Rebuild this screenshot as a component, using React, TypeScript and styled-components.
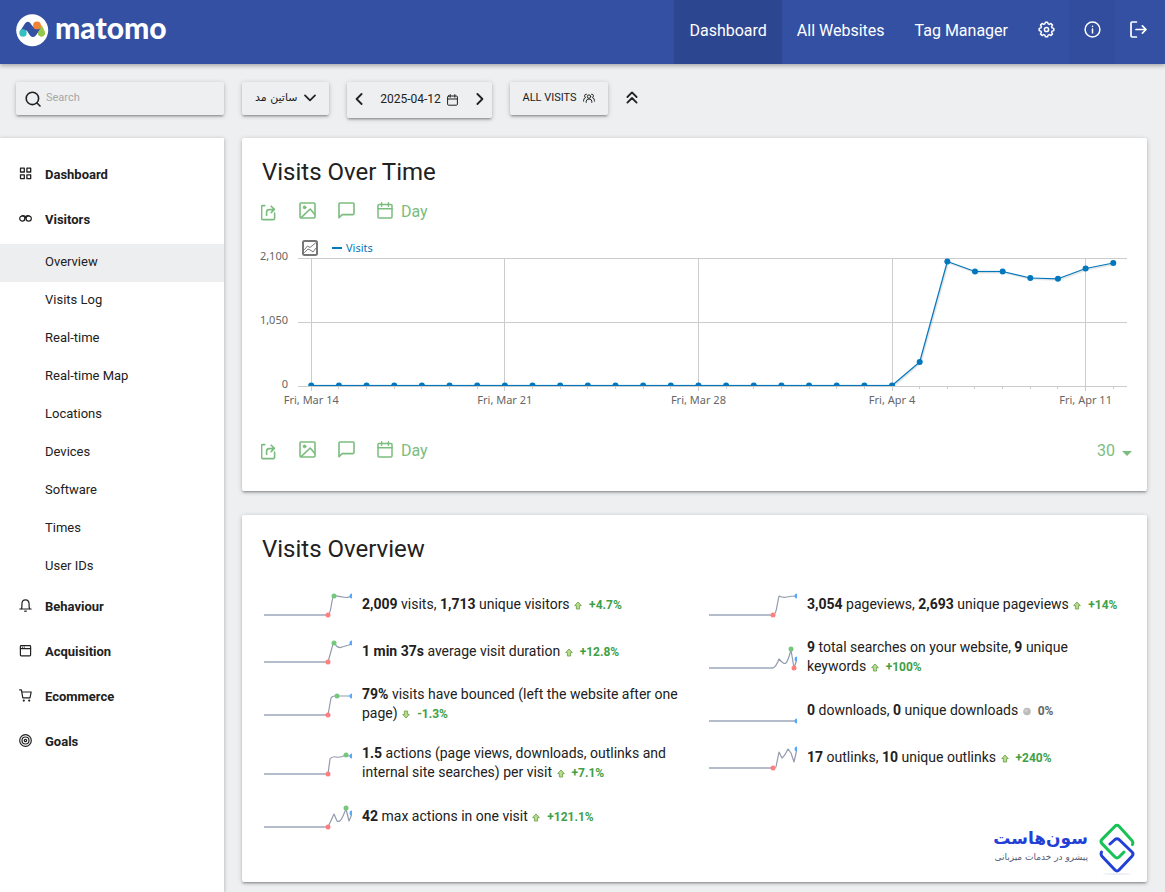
import React from "react";
import styled, { createGlobalStyle, css } from "styled-components";

const GREEN = "#7bbd7e";
const INK = "#212121";
const CHART_BLUE = "#0277bd";

const GlobalStyle = createGlobalStyle`
  *, *::before, *::after { box-sizing: border-box; }
  body {
    margin: 0;
    background: #eeeff1;
    color: ${INK};
    font-family: Roboto, "DejaVu Sans", sans-serif;
    font-size: 13px;
  }
  button, input, select { font: inherit; color: inherit; }
  a { color: inherit; text-decoration: none; }
  svg { display: block; flex: none; }
`;

const raised = css`
  box-shadow: 0 2px 2px 0 rgba(0, 0, 0, 0.14), 0 3px 1px -2px rgba(0, 0, 0, 0.12),
    0 1px 5px 0 rgba(0, 0, 0, 0.2);
`;

const Page = styled.div`
  display: flex;
  flex-direction: column;
  min-height: 100vh;
`;

/* Header */

const Header = styled.header`
  display: flex;
  justify-content: space-between;
  height: 64px;
  background: #3450a3;
  color: #fff;
  box-shadow: 0 2px 4px rgba(0, 0, 0, 0.28);
`;

const Brand = styled.a`
  display: flex;
  align-items: center;
  gap: 6px;
  height: 60px;
  padding-left: 16px;
`;

const Wordmark = styled.span`
  font-family: Lato, sans-serif;
  font-weight: 900;
  font-size: 30px;
  line-height: 32px;
  padding-bottom: 6px;
`;

const TopNav = styled.nav`
  display: flex;
  padding-right: 4px;
`;

const TopLink = styled.a<{ $active?: boolean }>`
  display: flex;
  align-items: center;
  padding: 0 15px 4px;
  font-size: 16px;
  background: ${(p) => (p.$active ? "#2d4690" : "transparent")};
`;

const TopIcon = styled.a<{ $shade?: boolean }>`
  display: flex;
  align-items: center;
  justify-content: center;
  width: 46px;
  padding-bottom: 6px;
  background: ${(p) => (p.$shade ? "#324d9e" : "transparent")};
`;

/* Toolbar */

const Toolbar = styled.div`
  display: flex;
  align-items: flex-start;
  gap: 18px;
  padding: 18px 16px 0;
  height: 74px;
`;

const SearchBox = styled.label`
  display: flex;
  align-items: center;
  gap: 5px;
  width: 208px;
  height: 33px;
  padding: 0 9px;
  border-radius: 2px;
  ${raised}
`;

const SearchInput = styled.input`
  flex: 1;
  min-width: 0;
  height: 20px;
  border: 0;
  padding: 0 0 3px;
  background: none;
  font-size: 11px;
  outline: none;
  &::placeholder { color: #a6a7a9; opacity: 1; }
`;

const ToolButton = styled.button`
  display: flex;
  align-items: center;
  gap: 6px;
  height: 33px;
  padding: 0 13px 2px;
  border: 0;
  border-radius: 2px;
  background: none;
  font-size: 11px;
  ${raised}
`;

const SiteName = styled.span`
  font-family: "DejaVu Sans", sans-serif;
  font-size: 11px;
`;

const DateBox = styled.div`
  display: flex;
  align-items: center;
  justify-content: space-between;
  width: 145px;
  height: 36px;
  padding: 0 8px 3px;
  border-radius: 2px;
  ${raised}
`;

const PlainButton = styled.button`
  display: flex;
  align-items: center;
  gap: 6px;
  padding: 0;
  border: 0;
  background: none;
`;

const DateButton = styled(PlainButton)`
  padding-top: 1px;
  font-size: 12px;
  svg { margin-top: 2px; }
`;

const CollapseButton = styled(PlainButton)`
  height: 30px;
`;

/* Sidebar */

const Columns = styled.div`
  display: flex;
  flex: 1;
  align-items: stretch;
  gap: 18px;
  padding-right: 18px;
`;

const Sidebar = styled.nav`
  flex: none;
  width: 224px;
  padding: 16px 0;
  background: #fff;
  box-shadow: 0 1px 4px rgba(0, 0, 0, 0.3);
`;

const Category = styled.a`
  display: flex;
  align-items: center;
  gap: 13px;
  height: 45px;
  padding: 0 19px 4px;
  font-weight: 700;
  svg { margin-bottom: 2px; }
`;

const SubItem = styled.a<{ $active?: boolean }>`
  display: flex;
  align-items: center;
  height: 38px;
  padding: 0 16px 4px 45px;
  background: ${(p) => (p.$active ? "#edeef0" : "transparent")};
`;

/* Cards */

const Main = styled.main`
  flex: 1;
  min-width: 0;
  display: flex;
  flex-direction: column;
  gap: 24px;
  padding-bottom: 10px;
`;

const Card = styled.section`
  position: relative;
  padding: 20px;
  background: #fff;
  border-radius: 2px;
  ${raised}
`;

const CardTitle = styled.h2`
  margin: 0;
  font-weight: 400;
  font-size: 24px;
  line-height: 28px;
`;

const Actions = styled.div`
  display: flex;
  align-items: center;
  gap: 22px;
  height: 20px;
  margin-left: -1px;
  color: ${GREEN};
`;

const ActionButton = styled.button`
  display: flex;
  align-items: center;
  gap: 8px;
  padding: 0;
  border: 0;
  background: none;
  font-size: 16px;
  line-height: 20px;
  svg { margin-bottom: 4px; }
`;

const RowLimit = styled.label`
  display: flex;
  align-items: center;
  gap: 7px;
  margin-left: auto;
  margin-right: -5px;
  font-size: 16px;
  svg { margin-top: 4px; }
`;

const LimitSelect = styled.select`
  appearance: none;
  border: 0;
  padding: 0;
  background: none;
  line-height: 20px;
`;

const Legend = styled.div`
  display: flex;
  align-items: center;
  gap: 14px;
  height: 16px;
  padding-left: 40px;
  color: ${CHART_BLUE};
  font-family: "Noto Sans", sans-serif;
  font-size: 11px;
  line-height: 14px;
`;

const LegendItem = styled.span`
  display: flex;
  align-items: center;
  gap: 4px;
`;

const LegendDash = styled.span`
  width: 10px;
  height: 2px;
  background: ${CHART_BLUE};
`;

const ChartArea = styled.div`
  padding: 2px 0 0 36px;
  font-family: "Noto Sans", sans-serif;
  font-size: 11px;
`;

const CardHeaderActions = styled.div`
  margin: 16px 0 18px;
`;

const CardFooterActions = styled.div`
  margin: 31px 0 10px;
`;

const Metrics = styled.div`
  display: grid;
  grid-template-columns: 1fr 1fr;
  gap: 25px;
  padding: 18px 0 22px;
`;

const MetricRow = styled.div`
  display: flex;
  align-items: center;
  gap: 10px;
  min-height: 47px;
  padding: 10px 0 10px 2px;
`;

const MetricText = styled.p`
  margin: 0;
  font-size: 14px;
  line-height: 19px;
`;

const Trend = styled.span<{ $flat?: boolean }>`
  white-space: nowrap;
  font-size: 12px;
  font-weight: 700;
  color: ${(p) => (p.$flat ? "#666" : "#3fa046")};
  svg {
    display: inline-block;
    vertical-align: -1px;
    margin: 0 7px 0 1px;
  }
`;

const HostBadge = styled.div`
  position: absolute;
  right: 12px;
  bottom: 7px;
  display: flex;
  align-items: center;
  gap: 11px;
`;

const HostText = styled.div`
  display: flex;
  flex-direction: column;
  align-items: flex-end;
  padding-bottom: 8px;
  font-family: "DejaVu Sans", sans-serif;
`;

const HostName = styled.strong`
  font-size: 17px;
  line-height: 24px;
  color: #2340d6;
`;

const HostTag = styled.span`
  font-size: 9px;
  line-height: 14px;
  color: #555b75;
`;

/* Icons */

type IconProps = { w?: number; h?: number; sw?: number; box: string; children: React.ReactNode };

const Icon = ({ w = 16, h = 16, sw = 1.5, box, children }: IconProps) => (
  <svg
    width={w}
    height={h}
    viewBox={box}
    fill="none"
    stroke="currentColor"
    strokeWidth={sw}
    strokeLinecap="round"
    strokeLinejoin="round"
    aria-hidden="true"
  >
    {children}
  </svg>
);

const MatomoMark = () => (
  <svg width="33" height="33" viewBox="0 0 33 33" aria-hidden="true">
    <circle cx="16.2" cy="16.2" r="16" fill="#fff" />
    <path
      d="M4 17.2 L9 9.4 Q11.2 6.6 14 8.8 L17 12.8 L24.6 14 L19.8 21.4 Q17 24.6 14 21.4 L10.6 16.2 L8 20 Z"
      fill="#3450a3"
    />
    <path d="M23.6 11 Q25.4 10.4 26.4 12.4 L28.8 17.4 A3.7 3.7 0 1 1 21.8 19.4 Z" fill="#95c748" />
    <path d="M16.6 12.4 L21 15.4 L24.6 14 L20.4 20.6 L16 17 Z" fill="#3450a3" />
    <circle cx="7" cy="19" r="3.7" fill="#35bfc0" />
    <circle cx="21" cy="11.4" r="3.9" fill="#f38334" />
  </svg>
);

const GearIcon = () => (
  <Icon w={17} h={17} sw={1.5} box="0 0 17 17">
    <path d="M7.4 1.2h2.2l.5 1.7 1.2.5 1.6-.9 1.6 1.6-.9 1.6.5 1.2 1.7.5v2.2l-1.7.5-.5 1.2.9 1.6-1.6 1.6-1.6-.9-1.2.5-.5 1.7H7.4l-.5-1.7-1.2-.5-1.6.9-1.6-1.6.9-1.6-.5-1.2-1.7-.5V7.4l1.7-.5.5-1.2-.9-1.6 1.6-1.6 1.6.9 1.2-.5z" />
    <circle cx="8.5" cy="8.5" r="2.1" />
  </Icon>
);

const InfoIcon = () => (
  <Icon w={17} h={17} box="0 0 17 17">
    <circle cx="8.5" cy="8.5" r="7.4" />
    <path d="M8.5 8v4M8.5 5.2v.2" />
  </Icon>
);

const LogoutIcon = () => (
  <Icon w={17} h={17} sw={1.7} box="0 0 17 17">
    <path d="M6.4 1H2.2Q1 1 1 2.2v12.6Q1 16 2.2 16h4.2M6 8.5h10M12.4 4.9 16 8.5l-3.6 3.6" />
  </Icon>
);

const SearchIcon = () => (
  <Icon w={16} h={16} sw={1.6} box="0 0 16 16">
    <circle cx="7.4" cy="7.4" r="6.2" />
    <path d="m12 12 3 3" />
  </Icon>
);

const ChevronIcon = ({ dir }: { dir: "down" | "left" | "right" }) => {
  if (dir === "down")
    return (
      <Icon w={12} h={8} sw={1.7} box="0 0 12 8">
        <path d="m1 1.4 5 5 5-5" />
      </Icon>
    );
  return (
    <Icon w={8} h={12} sw={1.8} box="0 0 8 12">
      <path d={dir === "left" ? "m6.6 1-5 5 5 5" : "m1.4 1 5 5-5 5"} />
    </Icon>
  );
};

const SmallCalendarIcon = () => (
  <Icon w={11} h={12} sw={1} box="0 0 11 12">
    <rect x=".6" y="2" width="9.8" height="9.2" rx="1" />
    <path d="M.6 5h9.8M3.2.6v2.6M7.8.6v2.6" />
  </Icon>
);

const PeopleIcon = () => (
  <Icon w={12} h={10} sw={1} box="0 0 12 10">
    <circle cx="6" cy="3.6" r="1.7" />
    <path d="M3.2 9.4V8.2Q3.4 6 6 6t2.8 2.2v1.2M3.4 1.2Q1.6 1 1.6 2.8q0 1.4 1 1.8Q.6 5 .6 7.4v.8M8.6 1.2q1.8-.2 1.8 1.6 0 1.4-1 1.8 2 .4 2 2.8v.8" />
  </Icon>
);

const CollapseIcon = () => (
  <Icon w={12} h={13} sw={1.8} box="0 0 12 13">
    <path d="m1.4 6 4.6-4.6L10.6 6M1.4 11.6 6 7l4.6 4.6" />
  </Icon>
);

const ExportIcon = () => (
  <Icon w={16} h={21} sw={1.6} box="1 -4 16 21">
    <path d="M4.8 1.6H2.6q-1 0-1 1v12q0 1 1 1h11q1 0 1-1V9" />
    <path d="M6.6 11.4V8.2q0-2.6 2.6-2.6h4.4M11.2 2.2l3.2 3.2-3.2 3.2" />
  </Icon>
);

const ImageIcon = () => (
  <Icon w={17} h={17} sw={1.6} box="0 0 17 17">
    <rect x="1" y="1" width="15" height="15" rx="1" />
    <circle cx="5.6" cy="5.4" r="1.4" fill="currentColor" strokeWidth="1" />
    <path d="m2.4 15.4 8.8-8.4 4.6 5.4" />
  </Icon>
);

const CommentIcon = () => (
  <Icon w={17} h={17} sw={1.6} box="0 0 17 17">
    <path d="M1 15.8V2q0-1 1-1h13q1 0 1 1v9.6q0 1-1 1H4.2z" />
  </Icon>
);

const CalendarIcon = () => (
  <Icon w={16} h={17} sw={1.5} box="0 0 16 17">
    <rect x="1" y="2.4" width="14" height="13.6" rx="1" />
    <path d="M1 6.8h14M4.6.8v3.4M11.4.8v3.4" />
  </Icon>
);

const SeriesIcon = () => (
  <Icon w={16} h={16} sw={2} box="0 0 16 16">
    <g stroke="#777">
      <rect x="1" y="1" width="14" height="14" rx="1.5" />
      <path strokeWidth="1" d="m2.5 9.5 3-3.5 2.5 1.5 5.5-4.5M2.5 12.5 6 9l3 1.5 2 1.5 2.5-3.5" />
    </g>
  </Icon>
);

const CaretIcon = () => (
  <svg width="10" height="5" viewBox="0 0 10 5" aria-hidden="true">
    <path d="M0 0h10L5 5z" fill="currentColor" />
  </svg>
);

const GridIcon = () => (
  <Icon w={13} h={13} sw={1.3} box="0 0 13 13">
    <path d="M1.5 1.2h3.8v3.8H1.5zM7.9 1.2h3.8v3.8H7.9zM1.5 7.8h3.8v3.8H1.5zM7.9 7.8h3.8v3.8H7.9z" />
  </Icon>
);

const BinocularsIcon = () => (
  <Icon w={13} h={13} sw={1.2} box="0 0 13 13">
    <circle cx="3.3" cy="6.6" r="2.6" />
    <circle cx="9.7" cy="6.6" r="2.6" />
    <path d="M2.6 4Q4.6 3 6.5 4.8Q8.4 3 10.4 4M5.3 8Q6.5 4.6 7.7 4.2" />
  </Icon>
);

const BellIcon = () => (
  <Icon w={13} h={13} sw={1.2} box="0 0 13 13">
    <path d="M.8 10h11.4M2.2 10q.7-1 .7-3V5.2Q2.9.8 6.5.8t3.6 4.4V7q0 2 .7 3M5.7 12.2h1.6" />
  </Icon>
);

const WindowIcon = () => (
  <Icon w={13} h={13} sw={1.2} box="0 0 13 13">
    <rect x="1.4" y="1.6" width="10.2" height="10.2" rx=".8" />
    <path d="M1.4 4.6h10.2M3.4 3.1h.1M5.2 3.1h.1" />
  </Icon>
);

const CartIcon = () => (
  <Icon w={13} h={13} sw={1.2} box="0 0 13 13">
    <path d="M.6.8h1.8l1.4 8h7.2l1.2-5.8H3" />
    <circle cx="4.8" cy="11.6" r=".5" fill="currentColor" />
    <circle cx="10.2" cy="11.6" r=".5" fill="currentColor" />
  </Icon>
);

const TargetIcon = () => (
  <Icon w={13} h={13} sw={1.2} box="0 0 13 13">
    <circle cx="6.5" cy="6.5" r="5.8" />
    <circle cx="6.5" cy="6.5" r="3.5" />
    <circle cx="6.5" cy="6.5" r="1.2" />
  </Icon>
);

const HostMark = () => (
  <svg width="36" height="52" viewBox="0 0 36 52" aria-hidden="true">
    <ellipse cx="18" cy="51" rx="14" ry="1" fill="#eceef5" />
    <g fill="none" strokeWidth="3" strokeLinecap="round" strokeLinejoin="round">
      <path stroke="#17c257" d="M33.5 21.5q1-2.5-.8-4.3L20 3.2q-2-1.8-4 0L3 16.4q-2 2.1 0 4.2L16 34q2 2 4 0l5-5" />
      <path stroke="#2340d6" d="m11 21 5-4.5q2-1.6 4 0L33 29q2 2.1 0 4.2L20 47q-2 2-4 0L3.2 33.5q-1.8-2-.7-4.5" />
    </g>
  </svg>
);

const TrendIcon = ({ kind }: { kind: "up" | "down" | "flat" }) => {
  if (kind === "flat")
    return (
      <svg width="8" height="9" viewBox="0 0 8 9" role="img" aria-label="unchanged">
        <circle cx="4" cy="4.5" r="3.8" fill="#bcbcbc" />
        <circle cx="3" cy="3.5" r="1.6" fill="#cfcfcf" />
      </svg>
    );
  return (
    <svg width="8" height="9" viewBox="0 0 8 9" role="img" aria-label={kind}>
      <path
        d={kind === "up" ? "M4 1 7.3 4.6H5.6V8H2.4V4.6H.7z" : "M4 8 .7 4.4h1.7V1h3.2v3.4h1.7z"}
        fill="#b9dc8a"
        stroke="#6fa653"
        strokeWidth=".9"
      />
    </svg>
  );
};

/* Evolution chart */

const PLOT_HEIGHT = 128;
const visits = [...Array(22).fill(127.5), 104, 3.5, 13.5, 13.5, 20, 20.8, 10.5, 5];
const xAt = (i: number) => `${1.6 + i * 3.336}%`;
const weekLabels: Record<number, string> = {
  0: "Fri, Mar 14",
  7: "Fri, Mar 21",
  14: "Fri, Mar 28",
  21: "Fri, Apr 4",
  28: "Fri, Apr 11",
};

const EvolutionChart = () => (
  <svg width="100%" height="152" overflow="visible" role="img" aria-label="Visits per day">
    <g stroke="#ccc" shapeRendering="crispEdges">
      {[0, 64, PLOT_HEIGHT].map((y) => (
        <line key={y} x1="0" x2="100%" y1={y + 0.5} y2={y + 0.5} />
      ))}
      {visits.map((_, i) => (
        <line key={i} x1={xAt(i)} x2={xAt(i)} y1={weekLabels[i] ? 0 : PLOT_HEIGHT} y2={weekLabels[i] ? 133 : 131} />
      ))}
    </g>
    <svg width="100%" height={PLOT_HEIGHT}>
      <g stroke="#000" strokeOpacity="0.1" strokeWidth="2" transform="translate(1 1)">
        {visits.slice(1).map((y, i) => (
          <line key={i} x1={xAt(i)} y1={visits[i]} x2={xAt(i + 1)} y2={y} />
        ))}
      </g>
      <g stroke={CHART_BLUE} strokeWidth="1.2">
        {visits.slice(1).map((y, i) => (
          <line key={i} x1={xAt(i)} y1={visits[i]} x2={xAt(i + 1)} y2={y} />
        ))}
      </g>
      {visits.map((y, i) => (
        <circle key={i} cx={xAt(i)} cy={y} r="3" fill={CHART_BLUE} />
      ))}
    </svg>
    <g fill="#666">
      <text x="-10" y="2" textAnchor="end">2,100</text>
      <text x="-10" y="66" textAnchor="end">1,050</text>
      <text x="-10" y="130" textAnchor="end">0</text>
      {Object.entries(weekLabels).map(([i, label]) => (
        <text key={i} x={xAt(Number(i))} y="146" textAnchor="middle">{label}</text>
      ))}
    </g>
  </svg>
);

/* Sparklines */

type Spark = { path: string; low?: [number, number]; high?: [number, number]; last: number; flatTo?: number };

const Sparkline = ({ path, low, high, last, flatTo = 64 }: Spark) => (
  <svg width="88" height="26" viewBox="0 3 88 26" aria-hidden="true">
    <path d={`M0 26H${flatTo}`} stroke="#b5bccb" strokeWidth="2" />
    <path d={path} fill="none" stroke="#929bac" strokeWidth="1.2" strokeLinejoin="round" />
    {low && <circle cx={low[0]} cy={low[1]} r="2.5" fill="#ff7f7f" />}
    {high && <circle cx={high[0]} cy={high[1]} r="2.5" fill="#75c77d" />}
    <circle cx="88" cy={last} r="2.5" fill="#55aaff" />
  </svg>
);

type Metric = { text: React.ReactNode; kind: "up" | "down" | "flat"; change: string; spark: Spark };

const leftMetrics: Metric[] = [
  {
    text: <><b>2,009</b> visits, <b>1,713</b> unique visitors</>,
    kind: "up",
    change: "+4.7%",
    spark: { path: "M64 26C68 24 67 8 70 7C73 6 82 10 85 8L88 7", low: [64, 26], high: [70, 7], last: 7 },
  },
  {
    text: <><b>1 min 37s</b> average visit duration</>,
    kind: "up",
    change: "+12.8%",
    spark: { path: "M64 26L69 8L71 8Q74 13 78 11L85 9L88 7", low: [64, 26], high: [70, 7], last: 7 },
  },
  {
    text: <><b>79%</b> visits have bounced (left the website after one page)</>,
    kind: "down",
    change: "-1.3%",
    spark: { path: "M64 26L67 9Q68 7 71 7H88", low: [64, 26], high: [73, 7], last: 7 },
  },
  {
    text: <><b>1.5</b> actions (page views, downloads, outlinks and internal site searches) per visit</>,
    kind: "up",
    change: "+7.1%",
    spark: { path: "M64 26L66 11Q68 8 72 9T82 7L85 8L88 8", low: [64, 26], high: [82, 7], last: 8 },
  },
  {
    text: <><b>42</b> max actions in one visit</>,
    kind: "up",
    change: "+121.1%",
    spark: { path: "M64 26L70 13L73 20Q76 22 79 15L82 8L85 20L88 13", low: [64, 26], high: [82, 7], last: 12 },
  },
];

const rightMetrics: Metric[] = [
  {
    text: <><b>3,054</b> pageviews, <b>2,693</b> unique pageviews</>,
    kind: "up",
    change: "+14%",
    spark: { path: "M64 26Q67 25 68 17L70 7Q74 9 78 8T88 7", low: [64, 26], last: 7 },
  },
  {
    text: <><b>9</b> total searches on your website, <b>9</b> unique keywords</>,
    kind: "up",
    change: "+100%",
    spark: { path: "M64 26Q67 25 70 17Q75 23 77 21T82 8L85 26L88 17", low: [85, 26], high: [82, 7], last: 17 },
  },
  {
    text: <><b>0</b> downloads, <b>0</b> unique downloads</>,
    kind: "flat",
    change: "0%",
    spark: { path: "", last: 26, flatTo: 88 },
  },
  {
    text: <><b>17</b> outlinks, <b>10</b> unique outlinks</>,
    kind: "up",
    change: "+240%",
    spark: { path: "M64 26L67 25L70 10L73 16Q75 15 79 7L82 11L85 20L88 7", low: [64, 26], last: 7 },
  },
];

const MetricColumn = ({ items }: { items: Metric[] }) => (
  <div>
    {items.map((m) => (
      <MetricRow key={m.change}>
        <Sparkline {...m.spark} />
        <MetricText>
          {m.text}{" "}
          <Trend $flat={m.kind === "flat"}>
            <TrendIcon kind={m.kind} />
            {m.change}
          </Trend>
        </MetricText>
      </MetricRow>
    ))}
  </div>
);

const ReportActions = ({ children }: { children?: React.ReactNode }) => (
  <Actions>
    <ActionButton aria-label="Export"><ExportIcon /></ActionButton>
    <ActionButton aria-label="Export as image"><ImageIcon /></ActionButton>
    <ActionButton aria-label="Annotations"><CommentIcon /></ActionButton>
    <ActionButton><CalendarIcon />Day</ActionButton>
    {children}
  </Actions>
);

const visitorPages = [
  "Overview",
  "Visits Log",
  "Real-time",
  "Real-time Map",
  "Locations",
  "Devices",
  "Software",
  "Times",
  "User IDs",
];

export default function App() {
  return (
    <Page>
      <GlobalStyle />
      <Header>
        <Brand href="#">
          <MatomoMark />
          <Wordmark>matomo</Wordmark>
        </Brand>
        <TopNav>
          <TopLink href="#" $active>Dashboard</TopLink>
          <TopLink href="#">All Websites</TopLink>
          <TopLink href="#">Tag Manager</TopLink>
          <TopIcon href="#" aria-label="Administration"><GearIcon /></TopIcon>
          <TopIcon href="#" aria-label="Help" $shade><InfoIcon /></TopIcon>
          <TopIcon href="#" aria-label="Sign out"><LogoutIcon /></TopIcon>
        </TopNav>
      </Header>

      <Toolbar>
        <SearchBox>
          <SearchIcon />
          <SearchInput type="text" placeholder="Search" aria-label="Search" />
        </SearchBox>
        <ToolButton>
          <SiteName lang="fa" dir="rtl">ساتین مد</SiteName>
          <ChevronIcon dir="down" />
        </ToolButton>
        <DateBox>
          <PlainButton aria-label="Previous period"><ChevronIcon dir="left" /></PlainButton>
          <DateButton>2025-04-12<SmallCalendarIcon /></DateButton>
          <PlainButton aria-label="Next period"><ChevronIcon dir="right" /></PlainButton>
        </DateBox>
        <ToolButton>ALL VISITS<PeopleIcon /></ToolButton>
        <CollapseButton aria-label="Collapse"><CollapseIcon /></CollapseButton>
      </Toolbar>

      <Columns>
        <Sidebar>
          <Category href="#"><GridIcon />Dashboard</Category>
          <Category href="#"><BinocularsIcon />Visitors</Category>
          {visitorPages.map((name, i) => (
            <SubItem key={name} href="#" $active={i === 0}>{name}</SubItem>
          ))}
          <Category href="#"><BellIcon />Behaviour</Category>
          <Category href="#"><WindowIcon />Acquisition</Category>
          <Category href="#"><CartIcon />Ecommerce</Category>
          <Category href="#"><TargetIcon />Goals</Category>
        </Sidebar>

        <Main>
          <Card>
            <CardTitle>Visits Over Time</CardTitle>
            <CardHeaderActions>
              <ReportActions />
            </CardHeaderActions>
            <Legend>
              <SeriesIcon />
              <LegendItem><LegendDash />Visits</LegendItem>
            </Legend>
            <ChartArea><EvolutionChart /></ChartArea>
            <CardFooterActions>
              <ReportActions>
                <RowLimit>
                  <LimitSelect aria-label="Rows" defaultValue="30"><option>30</option></LimitSelect>
                  <CaretIcon />
                </RowLimit>
              </ReportActions>
            </CardFooterActions>
          </Card>

          <Card>
            <CardTitle>Visits Overview</CardTitle>
            <Metrics>
              <MetricColumn items={leftMetrics} />
              <MetricColumn items={rightMetrics} />
            </Metrics>
            <HostBadge>
              <HostText lang="fa">
                <HostName>سون‌هاست</HostName>
                <HostTag>پیشرو در خدمات میزبانی</HostTag>
              </HostText>
              <HostMark />
            </HostBadge>
          </Card>
        </Main>
      </Columns>
    </Page>
  );
}
